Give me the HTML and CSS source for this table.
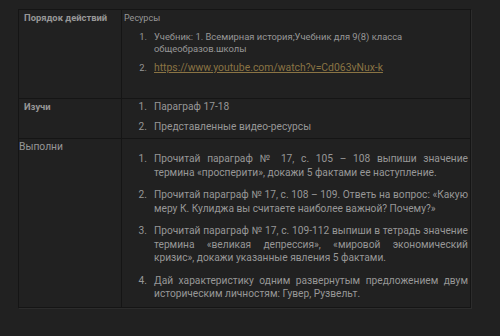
FILE: index.html
```html
<!DOCTYPE html>
<html lang="ru">
<head>
<meta charset="utf-8">
<link rel="stylesheet" href="styles.css">
</head>
<body>
<div class="table">
  <div class="row row-1">
    <div class="cell head"><span class="bold">Порядок действий</span></div>
    <div class="cell body">
      <div class="label">Ресурсы</div>
      <ol class="list small">
        <li><span class="num">1.</span><span class="txt">Учебник: 1. Всемирная история;Учебник для 9(8) класса общеобразов.школы</span></li>
        <li><span class="num">2.</span><span class="txt"><span class="link">https://www.youtube.com/watch?v=Cd063vNux-k</span></span></li>
      </ol>
    </div>
  </div>
  <div class="row row-2">
    <div class="cell head"><span class="bold">Изучи</span></div>
    <div class="cell body">
      <ol class="list mid">
        <li><span class="num">1.</span><span class="txt">Параграф 17-18</span></li>
        <li><span class="num">2.</span><span class="txt">Представленные видео-ресурсы</span></li>
      </ol>
    </div>
  </div>
  <div class="row row-3">
    <div class="cell head flush">Выполни</div>
    <div class="cell body">
      <ol class="list big">
        <li><span class="num">1.</span><span class="txt">Прочитай параграф № 17, с. 105 – 108 выпиши значение термина «просперити», докажи 5 фактами ее наступление.</span></li>
        <li><span class="num">2.</span><span class="txt">Прочитай параграф № 17, с. 108 – 109. Ответь на вопрос: «Какую меру К. Кулиджа вы считаете наиболее важной? Почему?»</span></li>
        <li><span class="num">3.</span><span class="txt">Прочитай параграф № 17, с. 109-112 выпиши в тетрадь значение термина «великая депрессия», «мировой экономический кризис», докажи указанные явления 5 фактами.</span></li>
        <li><span class="num">4.</span><span class="txt">Дай характеристику одним развернутым предложением двум историческим личностям: Гувер, Рузвельт.</span></li>
      </ol>
    </div>
  </div>
</div>
</body>
</html>
```

FILE: styles.css
```css
html, body {
  margin: 0;
  padding: 0;
  background: #212121;
}
body {
  font-family: Roboto, "Liberation Sans", Arial, sans-serif;
  color: #979797;
  width: 500px;
  height: 336px;
  overflow: hidden;
  padding: 9px 0 0 18px;
  box-sizing: border-box;
}
.table {
  width: 451px;
  border: 1px solid #151515;
  box-shadow: 1px 1px 0 #2c2c2c;
}
.row {
  display: grid;
  grid-template-columns: 103px 1fr;
  border-top: 1px solid #151515;
}
.row:first-child { border-top: none; }
.row-1 { height: 88px; }
.row-2 { height: 39px; }
.row-3 { height: 168px; }
.cell.head {
  border-right: 1px solid #151515;
  padding: 2px 0 0 5px;
  font-size: 9.4px;
  line-height: 12px;
}
.cell.head.flush {
  padding: 2px 0 0 0;
  font-size: 10.3px;
  line-height: 12px;
}
.bold { font-weight: 700; }
.cell.body {
  padding: 2px 0 0 1px;
  min-width: 0;
}
.label {
  font-size: 9px;
  line-height: 12px;
  padding-left: 1px;
}
.list {
  list-style: none;
  margin: 0;
  padding: 0;
}
.list li {
  display: flex;
}
.num {
  width: 24px;
  flex: none;
  text-align: right;
}
.txt {
  padding-left: 7px;
  flex: 1;
}
.small {
  font-size: 9.4px;
  line-height: 12px;
  margin-top: 7px;
  width: 300px;
}
.small li + li { margin-top: 7px; }
.mid {
  font-size: 10.2px;
  line-height: 12px;
}
.mid li + li { margin-top: 8px; }
.big {
  font-size: 10.2px;
  line-height: 13.5px;
  margin-top: 11px;
  margin-right: 2px;
}
.big .txt { text-align: justify; }
.big li + li { margin-top: 9px; }
.link {
  color: #8a7444;
  font-size: 10.4px;
  text-decoration: underline;
}
```
